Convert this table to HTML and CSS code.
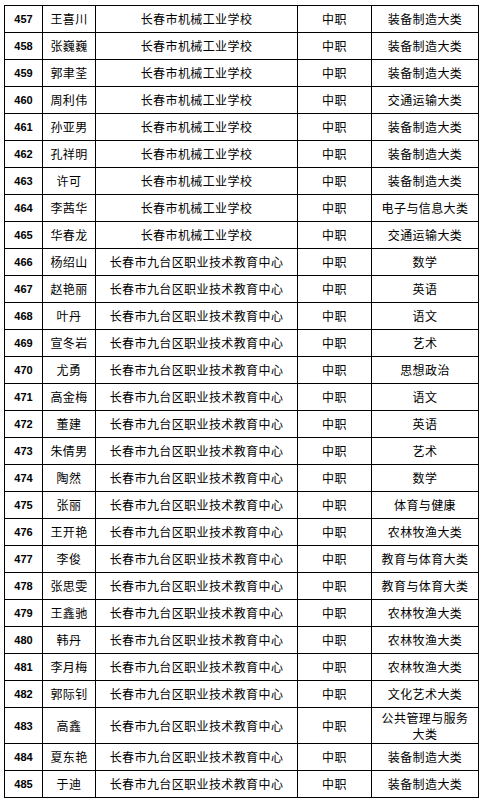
FILE: index.html
```html
<!DOCTYPE html>
<html lang="zh">
<head>
<meta charset="utf-8">
<link rel="stylesheet" href="styles.css">
</head>
<body>
<table class="list">
<colgroup><col class="c-no"><col class="c-name"><col class="c-school"><col class="c-level"><col class="c-major"></colgroup>
<tbody>
<tr><td class="no">457</td><td>王喜川</td><td>长春市机械工业学校</td><td>中职</td><td>装备制造大类</td></tr>
<tr><td class="no">458</td><td>张巍巍</td><td>长春市机械工业学校</td><td>中职</td><td>装备制造大类</td></tr>
<tr><td class="no">459</td><td>郭聿荃</td><td>长春市机械工业学校</td><td>中职</td><td>装备制造大类</td></tr>
<tr><td class="no">460</td><td>周利伟</td><td>长春市机械工业学校</td><td>中职</td><td>交通运输大类</td></tr>
<tr><td class="no">461</td><td>孙亚男</td><td>长春市机械工业学校</td><td>中职</td><td>装备制造大类</td></tr>
<tr><td class="no">462</td><td>孔祥明</td><td>长春市机械工业学校</td><td>中职</td><td>装备制造大类</td></tr>
<tr><td class="no">463</td><td>许可</td><td>长春市机械工业学校</td><td>中职</td><td>装备制造大类</td></tr>
<tr><td class="no">464</td><td>李茜华</td><td>长春市机械工业学校</td><td>中职</td><td>电子与信息大类</td></tr>
<tr><td class="no">465</td><td>华春龙</td><td>长春市机械工业学校</td><td>中职</td><td>交通运输大类</td></tr>
<tr><td class="no">466</td><td>杨绍山</td><td>长春市九台区职业技术教育中心</td><td>中职</td><td>数学</td></tr>
<tr><td class="no">467</td><td>赵艳丽</td><td>长春市九台区职业技术教育中心</td><td>中职</td><td>英语</td></tr>
<tr><td class="no">468</td><td>叶丹</td><td>长春市九台区职业技术教育中心</td><td>中职</td><td>语文</td></tr>
<tr><td class="no">469</td><td>宣冬岩</td><td>长春市九台区职业技术教育中心</td><td>中职</td><td>艺术</td></tr>
<tr><td class="no">470</td><td>尤勇</td><td>长春市九台区职业技术教育中心</td><td>中职</td><td>思想政治</td></tr>
<tr><td class="no">471</td><td>高金梅</td><td>长春市九台区职业技术教育中心</td><td>中职</td><td>语文</td></tr>
<tr><td class="no">472</td><td>董建</td><td>长春市九台区职业技术教育中心</td><td>中职</td><td>英语</td></tr>
<tr><td class="no">473</td><td>朱倩男</td><td>长春市九台区职业技术教育中心</td><td>中职</td><td>艺术</td></tr>
<tr><td class="no">474</td><td>陶然</td><td>长春市九台区职业技术教育中心</td><td>中职</td><td>数学</td></tr>
<tr><td class="no">475</td><td>张丽</td><td>长春市九台区职业技术教育中心</td><td>中职</td><td>体育与健康</td></tr>
<tr><td class="no">476</td><td>王开艳</td><td>长春市九台区职业技术教育中心</td><td>中职</td><td>农林牧渔大类</td></tr>
<tr><td class="no">477</td><td>李俊</td><td>长春市九台区职业技术教育中心</td><td>中职</td><td>教育与体育大类</td></tr>
<tr><td class="no">478</td><td>张思雯</td><td>长春市九台区职业技术教育中心</td><td>中职</td><td>教育与体育大类</td></tr>
<tr><td class="no">479</td><td>王鑫驰</td><td>长春市九台区职业技术教育中心</td><td>中职</td><td>农林牧渔大类</td></tr>
<tr><td class="no">480</td><td>韩丹</td><td>长春市九台区职业技术教育中心</td><td>中职</td><td>农林牧渔大类</td></tr>
<tr><td class="no">481</td><td>李月梅</td><td>长春市九台区职业技术教育中心</td><td>中职</td><td>农林牧渔大类</td></tr>
<tr><td class="no">482</td><td>郭际钊</td><td>长春市九台区职业技术教育中心</td><td>中职</td><td>文化艺术大类</td></tr>
<tr class="tall"><td class="no">483</td><td>高鑫</td><td>长春市九台区职业技术教育中心</td><td>中职</td><td>公共管理与服务<br>大类</td></tr>
<tr><td class="no">484</td><td>夏东艳</td><td>长春市九台区职业技术教育中心</td><td>中职</td><td>装备制造大类</td></tr>
<tr><td class="no">485</td><td>于迪</td><td>长春市九台区职业技术教育中心</td><td>中职</td><td>装备制造大类</td></tr>
</tbody>
</table>
</body>
</html>
```
FILE: styles.css
```css
html, body {
  margin: 0;
  background: #ffffff;
}
body {
  padding: 5px 0 0 4px;
}
.list {
  border-collapse: collapse;
  table-layout: fixed;
  width: 474px;
  font-family: "Noto Sans CJK SC", "Liberation Sans", sans-serif;
  font-size: 12px;
  color: #000;
}
.c-no { width: 38px; }
.c-name { width: 53px; }
.c-school { width: 202px; }
.c-level { width: 74px; }
.c-major { width: 107px; }
.list td {
  border: 1px solid #000;
  height: 26px;
  padding: 0;
  text-align: center;
  vertical-align: middle;
  line-height: 16px;
  letter-spacing: 0.4px;
  white-space: nowrap;
}
.list tr.tall td {
  height: 35px;
}
.list td.no {
  font-family: "Liberation Sans", sans-serif;
  font-weight: bold;
  font-size: 11px;
  letter-spacing: 0;
}
```
